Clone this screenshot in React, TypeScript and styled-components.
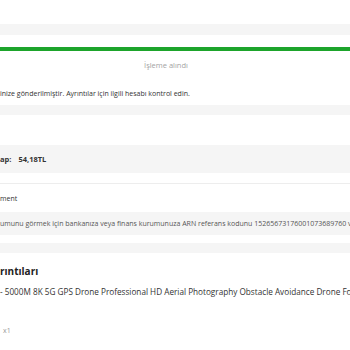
import styled, { createGlobalStyle } from 'styled-components'

const GlobalStyle = createGlobalStyle`
  html, body {
    margin: 0;
    padding: 0;
    background: #ffffff;
  }
  body {
    font-family: 'Open Sans', 'Noto Sans', sans-serif;
    color: #333333;
  }
`

const Page = styled.div`
  width: 350px;
  height: 350px;
  overflow: hidden;
  display: flex;
  flex-direction: column;
  white-space: nowrap;
`

const Band = styled.div<{ $h: number; $mt?: number }>`
  flex: none;
  height: ${({ $h }) => $h}px;
  margin-top: ${({ $mt }) => $mt || 0}px;
  background: #f5f5f5;
`

const Progress = styled.div`
  flex: none;
  height: 4px;
  margin-top: 12px;
  background: #1da42b;
`

const Status = styled.div`
  margin-top: 9px;
  padding-right: 18px;
  text-align: center;
  font-size: 7.5px;
  line-height: 11px;
  color: #a3a3a3;
`

const Message = styled.div`
  margin-top: 17px;
  font-size: 7px;
  line-height: 11px;
  color: #333333;
`

const Summary = styled.div`
  flex: none;
  height: 28px;
  margin-top: 30px;
  display: flex;
  align-items: center;
  gap: 7px;
  background: #f5f5f5;
  font-size: 7.5px;
  font-weight: 700;
  color: #333333;
`

const Divider = styled.div`
  flex: none;
  height: 1px;
  margin-top: 10px;
  background: #ededed;
`

const Label = styled.div`
  margin-top: 9px;
  font-size: 7px;
  line-height: 11px;
  color: #333333;
`

const Info = styled.div`
  flex: none;
  height: 23px;
  margin-top: 8px;
  display: flex;
  align-items: center;
  background: #f5f5f5;
  font-size: 7px;
  color: #555555;
`

const Heading = styled.div`
  margin-top: 11px;
  font-size: 10px;
  line-height: 14px;
  font-weight: 700;
  color: #222222;
`

const Product = styled.div`
  margin-top: 8px;
  font-size: 8.2px;
  line-height: 12px;
  color: #333333;
`

const Qty = styled.div`
  margin-top: 28px;
  padding-left: 3px;
  font-size: 7px;
  line-height: 10px;
  color: #9a9a9a;
`

export default function App() {
  return (
    <>
      <GlobalStyle />
      <Page>
        <Band $h={11} $mt={24} />
        <Progress />
        <Status>İşleme alındı</Status>
        <Message>inize gönderilmiştir. Ayrıntılar için ilgili hesabı kontrol edin.</Message>
        <Band $h={10} $mt={6} />
        <Summary>
          <span>ap:</span>
          <span>54,18TL</span>
        </Summary>
        <Divider />
        <Label>ment</Label>
        <Info>umunu görmek için bankanıza veya finans kurumunuza ARN referans kodunu 15265673176001073689760 ve</Info>
        <Band $h={10} $mt={8} />
        <Heading>rıntıları</Heading>
        <Product>- 5000M 8K 5G GPS Drone Professional HD Aerial Photography Obstacle Avoidance Drone For</Product>
        <Qty>x1</Qty>
      </Page>
    </>
  )
}
